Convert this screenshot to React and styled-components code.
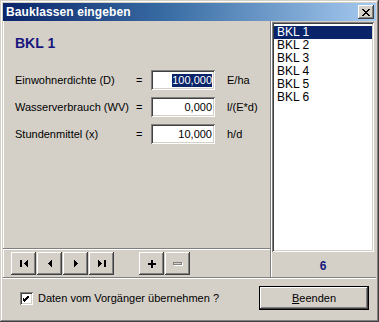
import React from 'react';
import styled, { createGlobalStyle } from 'styled-components';

const GlobalStyle = createGlobalStyle`
  html, body {
    margin: 0;
    padding: 0;
    background: #D4D0C8;
  }
  * {
    box-sizing: border-box;
  }
`;

const Window = styled.div`
  width: 379px;
  height: 322px;
  padding: 3px;
  display: flex;
  flex-direction: column;
  background: #D4D0C8;
  font-family: "Liberation Sans", Arial, sans-serif;
  font-size: 11px;
  color: #000;
  box-shadow: inset -1px -1px #404040, inset 1px 1px #D4D0C8,
    inset -2px -2px #808080, inset 2px 2px #fff;
`;

const TitleBar = styled.div`
  height: 18px;
  flex: none;
  display: flex;
  align-items: center;
  justify-content: space-between;
  padding: 0 2px 0 3px;
  background: linear-gradient(90deg, #0A246A 0%, #3A6EA5 45%, #A6CAF0 100%);
`;

const Title = styled.span`
  color: #fff;
  font-weight: bold;
  font-size: 12px;
  letter-spacing: 0.1px;
`;

const BevelButton = styled.button`
  display: flex;
  align-items: center;
  justify-content: center;
  padding: 0;
  margin: 0;
  border: none;
  background: #D4D0C8;
  font-family: inherit;
  font-size: 11px;
  color: #000;
  box-shadow: inset -1px -1px #404040, inset 1px 1px #fff,
    inset -2px -2px #808080, inset 2px 2px #D4D0C8;
`;

const CloseButton = styled(BevelButton)`
  width: 16px;
  height: 14px;
`;

const Body = styled.div`
  flex: 1;
  display: flex;
  min-height: 0;
`;

const LeftPanel = styled.div`
  width: 268px;
  display: flex;
  flex-direction: column;
  border-right: 1px solid #808080;
  box-shadow: inset 1px 0 #fff;
`;

const Heading = styled.h1`
  margin: 14px 0 0 12px;
  font-size: 14px;
  line-height: 16px;
  font-weight: bold;
  color: #17177E;
`;

const Form = styled.div`
  margin: 19px 0 0 12px;
  display: grid;
  grid-template-columns: 121px 15px 64px auto;
  grid-auto-rows: 20px;
  row-gap: 7px;
  align-items: center;
`;

const Label = styled.span`
  font-size: 11px;
  white-space: nowrap;
`;

const Eq = styled.span`
  font-size: 11px;
`;

const Unit = styled.span`
  padding-left: 12px;
  font-size: 11px;
  white-space: nowrap;
`;

const Field = styled.div`
  height: 20px;
  display: flex;
  align-items: center;
  justify-content: flex-end;
  padding: 0 3px;
  overflow: hidden;
  background: #fff;
  box-shadow: inset 1px 1px #808080, inset -1px -1px #fff,
    inset 2px 2px #404040, inset -2px -2px #D4D0C8;
  font-size: 11px;
  white-space: nowrap;
`;

const Selected = styled.span`
  background: #0A246A;
  color: #fff;
  line-height: 13px;
`;

const Spacer = styled.div`
  flex: 1;
`;

const NavStrip = styled.div`
  height: 29px;
  display: flex;
  align-items: flex-start;
  padding: 3px 0 0 8px;
  border-top: 1px solid #808080;
  box-shadow: inset 0 1px #fff;
`;

const NavButton = styled(BevelButton)`
  width: 25px;
  height: 23px;
  margin-right: ${({ $gap }) => $gap || 1}px;
`;

const RightPanel = styled.div`
  flex: 1;
  display: flex;
  flex-direction: column;
  padding: 1px 2px 0 1px;
  box-shadow: inset 1px 0 #fff;
`;

const ListBox = styled.div`
  height: 230px;
  padding: 4px 2px 2px 2px;
  background: #fff;
  box-shadow: inset 1px 1px #808080, inset -1px -1px #fff,
    inset 2px 2px #404040, inset -2px -2px #D4D0C8;
`;

const ListItem = styled.div`
  height: 13px;
  line-height: 13px;
  padding-left: 3px;
  font-size: 12px;
  background: ${({ $active }) => ($active ? '#0A246A' : 'transparent')};
  color: ${({ $active }) => ($active ? '#fff' : '#000')};
`;

const Count = styled.div`
  flex: 1;
  display: flex;
  align-items: center;
  justify-content: center;
  padding-top: 2px;
  font-weight: bold;
  font-size: 12px;
  color: #17177E;
`;

const Footer = styled.div`
  height: 42px;
  flex: none;
  display: flex;
  align-items: center;
  justify-content: space-between;
  padding: 0 7px 1px 17px;
  border-top: 1px solid #808080;
  box-shadow: inset 0 1px #fff;
`;

const CheckRow = styled.label`
  display: flex;
  align-items: center;
  gap: 5px;
  font-size: 11px;
`;

const CheckBox = styled.span`
  width: 13px;
  height: 13px;
  display: flex;
  align-items: center;
  justify-content: center;
  background: #fff;
  box-shadow: inset 1px 1px #808080, inset -1px -1px #fff,
    inset 2px 2px #404040, inset -2px -2px #D4D0C8;
`;

const DefaultButton = styled(BevelButton)`
  width: 110px;
  height: 24px;
  font-size: 11px;
  box-shadow: inset 0 0 0 1px #000, inset -2px -2px #404040,
    inset 2px 2px #fff, inset -3px -3px #808080;
`;

const Glyph = ({ children, w = 10, h = 7 }) => (
  <svg width={w} height={h} viewBox={`0 0 ${w} ${h}`} shapeRendering="crispEdges">
    {children}
  </svg>
);

const FirstIcon = () => (
  <Glyph w={8}>
    <rect x="0" y="0" width="2" height="7" fill="#000" />
    <polygon points="8,0 4,3.5 8,7" fill="#000" />
  </Glyph>
);

const PrevIcon = () => (
  <Glyph w={4}>
    <polygon points="4,0 0,3.5 4,7" fill="#000" />
  </Glyph>
);

const NextIcon = () => (
  <Glyph w={4}>
    <polygon points="0,0 4,3.5 0,7" fill="#000" />
  </Glyph>
);

const LastIcon = () => (
  <Glyph w={8}>
    <polygon points="0,0 4,3.5 0,7" fill="#000" />
    <rect x="6" y="0" width="2" height="7" fill="#000" />
  </Glyph>
);

const PlusIcon = () => (
  <Glyph w={8} h={8}>
    <rect x="3" y="0" width="2" height="8" fill="#000" />
    <rect x="0" y="3" width="8" height="2" fill="#000" />
  </Glyph>
);

const MinusIcon = () => (
  <Glyph w={10} h={4}>
    <rect x="1" y="1" width="9" height="3" fill="#fff" />
    <rect x="0" y="0" width="9" height="3" fill="#808080" />
    <rect x="1" y="1" width="7" height="1" fill="#D4D0C8" />
  </Glyph>
);

const CloseIcon = () => (
  <Glyph w={8} h={7}>
    <path d="M0 0h2v1h1v1h2v-1h1v-1h2v1h-1v1h-1v1h-1v1h1v1h1v1h1v1h-2v-1h-1v-1h-2v1h-1v1h-2v-1h1v-1h1v-1h1v-1h-1v-1h-1v-1h-1z" fill="#000" />
  </Glyph>
);

const CheckIcon = () => (
  <svg width="7" height="7" viewBox="0 0 7 7" shapeRendering="crispEdges">
    <path d="M6 0v3h-1v1h-1v1h-1v1h-1v1h-1v-1h-1v-1h-1v-3h1v1h1v1h1v-1h1v-1h1v-1h1z" fill="#000" />
  </svg>
);

const fields = [
  { label: 'Einwohnerdichte (D)', value: '100,000', unit: 'E/ha', selected: true },
  { label: 'Wasserverbrauch (WV)', value: '0,000', unit: 'l/(E*d)' },
  { label: 'Stundenmittel (x)', value: '10,000', unit: 'h/d' },
];

const classes = ['BKL 1', 'BKL 2', 'BKL 3', 'BKL 4', 'BKL 5', 'BKL 6'];

export default function App() {
  return (
    <>
      <GlobalStyle />
      <Window>
        <TitleBar>
          <Title>Bauklassen eingeben</Title>
          <CloseButton>
            <CloseIcon />
          </CloseButton>
        </TitleBar>
        <Body>
          <LeftPanel>
            <Heading>BKL 1</Heading>
            <Form>
              {fields.map((f) => (
                <React.Fragment key={f.label}>
                  <Label>{f.label}</Label>
                  <Eq>=</Eq>
                  <Field>
                    {f.selected ? <Selected>{f.value}</Selected> : f.value}
                  </Field>
                  <Unit>{f.unit}</Unit>
                </React.Fragment>
              ))}
            </Form>
            <Spacer />
            <NavStrip>
              <NavButton><FirstIcon /></NavButton>
              <NavButton><PrevIcon /></NavButton>
              <NavButton><NextIcon /></NavButton>
              <NavButton $gap={25}><LastIcon /></NavButton>
              <NavButton><PlusIcon /></NavButton>
              <NavButton><MinusIcon /></NavButton>
            </NavStrip>
          </LeftPanel>
          <RightPanel>
            <ListBox>
              {classes.map((c, i) => (
                <ListItem key={c} $active={i === 0}>{c}</ListItem>
              ))}
            </ListBox>
            <Count>6</Count>
          </RightPanel>
        </Body>
        <Footer>
          <CheckRow>
            <CheckBox><CheckIcon /></CheckBox>
            Daten vom Vorgänger übernehmen ?
          </CheckRow>
          <DefaultButton>
            <span><u>B</u>eenden</span>
          </DefaultButton>
        </Footer>
      </Window>
    </>
  );
}
